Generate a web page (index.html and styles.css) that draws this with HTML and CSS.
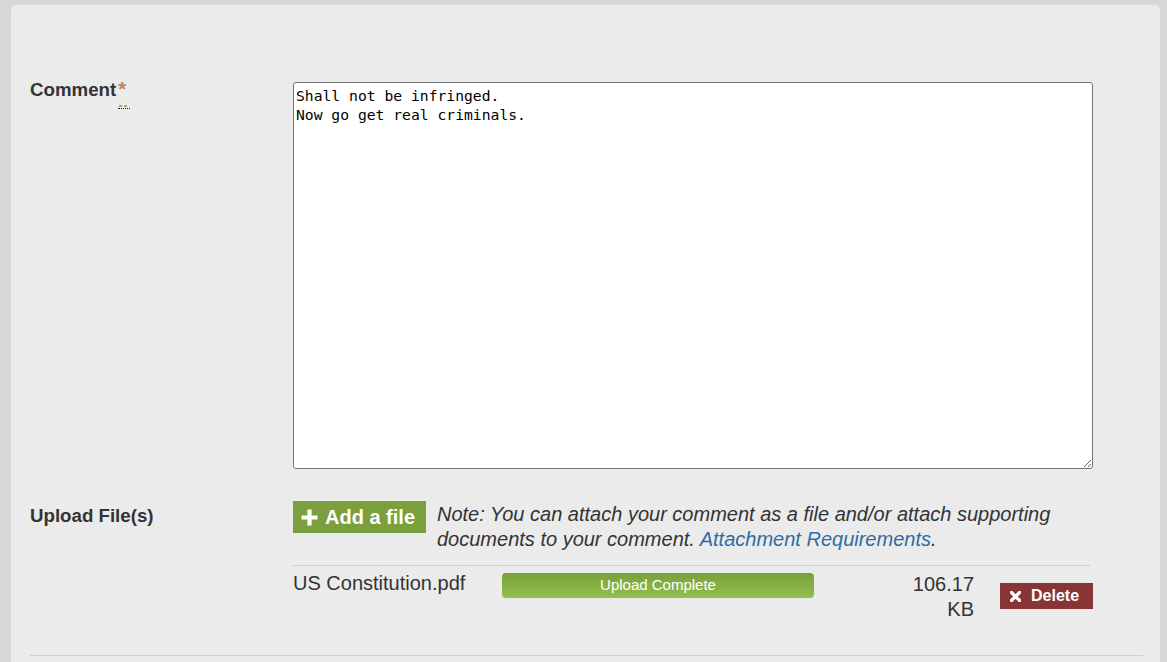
FILE: index.html
```html
<!DOCTYPE html>
<html lang="en">
<head>
<meta charset="utf-8">
<title>Comment form</title>
<link rel="stylesheet" href="styles.css">
</head>
<body>
<div class="panel">
  <div class="form-row comment-row">
    <div class="label">Comment<span class="req">*</span><span class="req-mark"><i></i><i></i></span></div>
    <div class="field">
      <textarea class="comment-box">Shall not be infringed.
Now go get real criminals.</textarea>
    </div>
  </div>

  <div class="form-row upload-row">
    <div class="label upload-label">Upload File(s)</div>
    <div class="field">
      <div class="add-line">
        <button class="add-btn" type="button">
          <svg class="plus" width="17" height="17" viewBox="0 0 17 17"><path d="M8.5 0.5v16M0.5 8.5h16" stroke="#fff" stroke-width="4.2" fill="none"/></svg>
          <span>Add a file</span>
        </button>
        <p class="note">Note: You can attach your comment as a file and/or attach supporting documents to your comment. <a href="#">Attachment Requirements</a>.</p>
      </div>
      <div class="file-row">
        <div class="file-name">US Constitution.pdf</div>
        <div class="progress">Upload Complete</div>
        <div class="file-size">106.17 KB</div>
        <button class="del-btn" type="button">
          <svg class="xicon" width="11" height="11" viewBox="0 0 11 11"><path d="M1.5 1.5l8 8M9.5 1.5l-8 8" stroke="#fff" stroke-width="3.2" stroke-linecap="round" fill="none"/></svg>
          <span>Delete</span>
        </button>
      </div>
    </div>
  </div>
  <div class="bottom-rule"></div>
</div>
</body>
</html>
```

FILE: styles.css
```css
html, body {
  margin: 0;
  padding: 0;
}
body {
  background: #d8d8d8;
  font-family: "Liberation Sans", Arial, sans-serif;
  color: #333;
  height: 662px;
  overflow: hidden;
}
.panel {
  margin: 5px 7px 0 11px;
  background: #ebebeb;
  border-radius: 5px 5px 0 0;
  padding: 74px 17px 0 19px;
  height: 657px;
  box-sizing: border-box;
}
.form-row {
  display: grid;
  grid-template-columns: 263px 800px;
}
.label {
  font-size: 18.7px;
  font-weight: bold;
  color: #333;
  position: relative;
  line-height: 22px;
}
.req {
  color: #b3895f;
  margin-left: 2px;
  font-size: 20px;
  line-height: 0;
}
.req-mark {
  position: absolute;
  left: 88px;
  top: 26px;
  width: 11px;
  height: 3px;
  border-bottom: 1px dotted #222;
  display: flex;
  gap: 2px;
  padding-left: 1px;
}
.req-mark i {
  display: block;
  width: 3px;
  height: 2px;
  background: #c79a6a;
}
.comment-box {
  display: block;
  margin: 3px 0 0 0;
  width: 800px;
  height: 387px;
  box-sizing: border-box;
  border: 1px solid #767676;
  border-radius: 3px;
  background: #fff;
  padding: 3px 2px;
  font-family: "DejaVu Sans Mono", "Liberation Mono", monospace;
  font-size: 14.7px;
  line-height: 19px;
  color: #000;
  resize: both;
}
.upload-row {
  margin-top: 32px;
}
.upload-label {
  margin-top: 4px;
}
.add-line {
  display: flex;
  align-items: flex-start;
}
.add-btn {
  flex: 0 0 auto;
  display: flex;
  align-items: center;
  gap: 7px;
  width: 133px;
  height: 32px;
  padding: 0 0 0 8px;
  border: 0;
  background: #7a9f3c;
  color: #fff;
  font-family: "Liberation Sans", Arial, sans-serif;
  font-size: 20px;
  font-weight: bold;
  cursor: pointer;
}
.add-btn span {
  margin-top: 1px;
}
.note {
  margin: 1px 0 0 11px;
  font-size: 20px;
  line-height: 25px;
  font-style: italic;
  color: #333;
}
.note a {
  color: #2d6da4;
  text-decoration: none;
}
.file-row {
  margin-top: 13px;
  border-top: 1px solid #cfcfcf;
  width: 797px;
  display: flex;
  align-items: flex-start;
  padding-top: 6px;
}
.file-name {
  flex: 0 0 209px;
  font-size: 20px;
  line-height: 25px;
  margin-top: -1px;
}
.progress {
  flex: 0 0 312px;
  height: 25px;
  margin-top: 1px;
  box-sizing: border-box;
  border-radius: 4px;
  background: linear-gradient(#78a038, #95bf4f);
  color: #fff;
  font-size: 15px;
  line-height: 23px;
  text-align: center;
}
.file-size {
  margin-left: auto;
  width: 66px;
  font-size: 20px;
  line-height: 25px;
  text-align: right;
}
.del-btn {
  flex: 0 0 auto;
  display: flex;
  align-items: center;
  gap: 10px;
  margin: 11px -3px 0 26px;
  width: 93px;
  height: 26px;
  padding: 0 0 0 10px;
  border: 0;
  background: #8a3535;
  color: #fff;
  font-family: "Liberation Sans", Arial, sans-serif;
  font-size: 16px;
  font-weight: bold;
  cursor: pointer;
}
.bottom-rule {
  margin-top: 33px;
  border-top: 1px solid #cfcfcf;
}
```
